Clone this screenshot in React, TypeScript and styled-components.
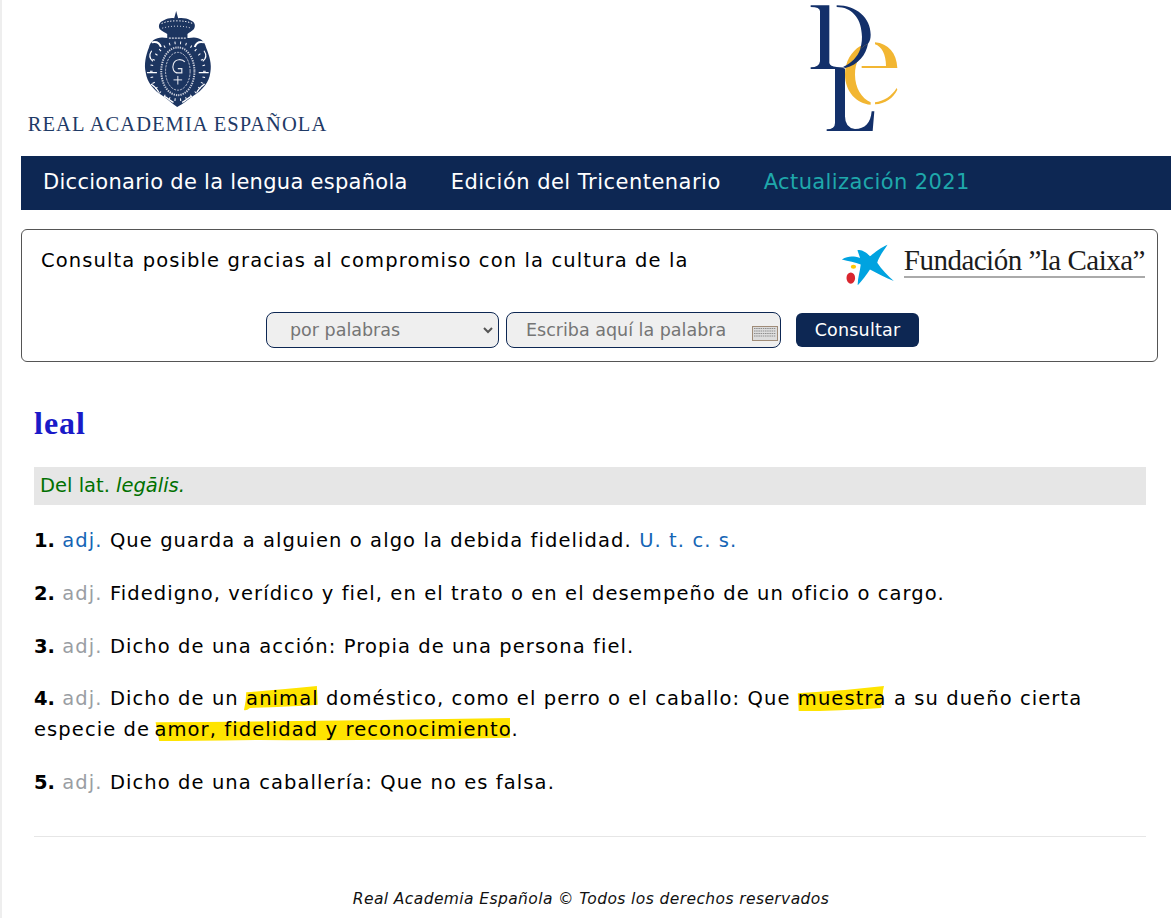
import React from "react";
import styled, { createGlobalStyle } from "styled-components";

const navy = "#0d2753";
const crestBlue = "#1d3461";
const gold = "#f2b632";

const GlobalStyle = createGlobalStyle`
  html, body {
    margin: 0;
    padding: 0;
    background: #fff;
  }
  body {
    border-left: 2px solid #eeeeee;
    font-family: "DejaVu Sans", sans-serif;
    color: #000;
    overflow: hidden;
  }
`;

const Page = styled.div`
  padding-left: 19px;
  height: 918px;
  box-sizing: border-box;
`;

const Header = styled.header`
  height: 156px;
  display: flex;
`;

const AcademiaLogo = styled.div`
  width: 313px;
  padding-top: 9px;
  display: flex;
  flex-direction: column;
  align-items: center;
`;

const AcademiaName = styled.div`
  font-family: "Liberation Serif", serif;
  font-size: 20.5px;
  letter-spacing: 1.05px;
  color: #1f3a66;
  white-space: nowrap;
  line-height: 24px;
  margin-top: 3px;
`;

const DleLogo = styled.div`
  margin-left: 476px;
  padding-top: 3px;
`;

const Nav = styled.nav`
  height: 54px;
  padding-bottom: 2px;
  box-sizing: border-box;
  background: ${navy};
  display: flex;
  align-items: center;
  padding-left: 22px;
  gap: 43px;
  font-size: 21px;
`;

const NavItem = styled.span<{ $accent?: boolean; $spacing: number }>`
  color: ${(p) => (p.$accent ? "#1fa8ab" : "#fff")};
  letter-spacing: ${(p) => p.$spacing}px;
  white-space: nowrap;
`;

const SearchBox = styled.section`
  box-sizing: border-box;
  margin: 19px 13px 0 0;
  height: 133px;
  border: 1px solid #555;
  border-radius: 6px;
  padding: 0 12px 0 19px;
  display: flex;
  flex-direction: column;
`;

const SponsorRow = styled.div`
  height: 82px;
  display: flex;
  justify-content: space-between;
`;

const SponsorText = styled.p`
  margin: 17px 0 0;
  font-size: 19.5px;
  line-height: 27px;
  letter-spacing: 1.12px;
  white-space: nowrap;
`;

const SponsorLogo = styled.div`
  display: flex;
  align-items: flex-start;
  padding-top: 13px;
`;

const SponsorName = styled.div`
  font-family: "Liberation Serif", serif;
  font-size: 29px;
  line-height: 31px;
  letter-spacing: -0.5px;
  color: #1c1c1c;
  border-bottom: 2px solid #aaa;
  margin: 2px 0 0 9px;
  white-space: nowrap;
`;

const Controls = styled.form`
  display: flex;
  align-items: center;
  margin-left: 225px;
`;

const Field = styled.div<{ $width: number }>`
  box-sizing: border-box;
  position: relative;
  width: ${(p) => p.$width}px;
  height: 36px;
  border: 1px solid ${navy};
  border-radius: 8px;
  background: #efefef;
  color: #757575;
  font-size: 17.5px;
  line-height: 34px;
  display: flex;
  align-items: center;
  justify-content: space-between;
  margin-right: 7px;
`;

const FieldText = styled.span<{ $left: number }>`
  padding-left: ${(p) => p.$left}px;
  white-space: nowrap;
`;

const Submit = styled.button`
  box-sizing: border-box;
  width: 123px;
  height: 34px;
  margin-left: 8px;
  border: 0;
  border-radius: 6px;
  background: ${navy};
  color: #fff;
  font-family: inherit;
  font-size: 17.5px;
  letter-spacing: 0.2px;
  padding: 0;
`;

const Content = styled.main`
  margin: 0 25px 0 13px;
`;

const Headword = styled.h1`
  margin: 43px 0 0;
  font-family: "Liberation Serif", serif;
  font-size: 32px;
  line-height: 36px;
  letter-spacing: 1px;
  font-weight: bold;
  color: #1a1ac8;
`;

const Etymology = styled.p`
  margin: 26px 0 0;
  height: 38px;
  line-height: 38px;
  padding-left: 6px;
  background: #e6e6e6;
  color: #007000;
  font-size: 19.5px;
`;

const Definition = styled.p`
  margin: 20px 0 0;
  font-size: 19.5px;
  line-height: 31px;
  letter-spacing: 1.09px;
  isolation: isolate;
  & + & {
    margin-top: 21.75px;
  }
`;

const Num = styled.b`
  letter-spacing: 0;
`;

const Abbr = styled.span<{ $muted?: boolean }>`
  color: ${(p) => (p.$muted ? "#9a9ea3" : "#1565b5")};
`;

const Marked = styled.span<{ $shift: number }>`
  position: relative;
  margin-left: ${(p) => p.$shift}px;
`;

const MarkStroke = styled.svg`
  position: absolute;
  left: -2px;
  width: calc(100% + 1px);
  top: -1px;
  height: calc(100% + 2px);
  z-index: -1;
  overflow: visible;
`;

const Divider = styled.hr`
  margin: 38px 0 0;
  border: 0;
  border-top: 1px solid #e6e6e6;
`;

const Footer = styled.footer`
  margin-top: 53px;
  padding-left: 2px;
  text-align: center;
  font-size: 15.5px;
  font-style: italic;
  letter-spacing: 0.4px;
  color: #111;
`;

const Mark: React.FC<{ d: string; shift?: number; children: React.ReactNode }> = ({ d, shift = 0, children }) => (
  <Marked $shift={shift}>
    <MarkStroke viewBox="0 0 100 24" preserveAspectRatio="none">
      <path d={d} fill="#ffe400" />
    </MarkStroke>
    {children}
  </Marked>
);

// specks of light around the shield, in the same coordinates as the crest zoom
const ringSpecks = Array.from({ length: 30 }, (_, i) => {
  const a = (i / 30) * Math.PI * 2;
  return { x: 527 + Math.cos(a) * 80, y: 212 + Math.sin(a) * 86, r: a * 57 };
});

const Crest = () => (
  <svg width="68" height="100" viewBox="425 25 205 300">
    <defs>
      <filter id="soft">
        <feGaussianBlur stdDeviation="1.1" />
      </filter>
    </defs>
    <g filter="url(#soft)">
      <g fill={crestBlue}>
        <path d="M522 30L528 52C540 50 555 52 565 58C578 62 582 75 575 85C568 92 560 95 556 100V112H495V100C490 95 480 92 473 85C466 75 472 62 485 58C495 52 508 50 516 52Z" />
        <path d="M495 112C470 105 445 115 440 140C430 165 425 190 430 215C434 245 455 270 480 285C495 295 510 310 525 320C545 310 560 295 575 285C600 270 622 245 625 215C630 190 622 165 612 140C607 115 585 105 560 112Z" />
      </g>
      <g fill="none" stroke="#fff">
        <path d="M478 68c14-6 28-8 46-8s32 2 48 8" strokeWidth="3" strokeDasharray="4 5" />
        <path d="M480 82c14-4 28-6 44-6s30 2 44 6" strokeWidth="2.5" strokeDasharray="3 6" />
        <path d="M500 112h52" strokeWidth="3" strokeDasharray="6 3" />
        <ellipse cx="527" cy="212" rx="50" ry="72" strokeWidth="6" strokeDasharray="4 3" opacity="0.75" />
        <ellipse cx="527" cy="212" rx="37" ry="57" strokeWidth="2" strokeDasharray="7 3" />
        <path d="M548 184c-8-10-28-10-34 5-6 15 2 28 13 28h12v-13h-12" strokeWidth="3.5" opacity="0.9" />
        <path d="M527 226v26M514 238h26" strokeWidth="3" opacity="0.9" />
        <path d="M448 125c14-4 24 2 28 14M606 125c-14-4-24 2-28 14" strokeWidth="6" />
        <path d="M448 150c-8 12-6 24 4 32M606 150c8 12 6 24-4 32" strokeWidth="3.5" />
        <path d="M434 216h30M590 216h30" strokeWidth="4" />
        <path d="M446 250c10 6 18 14 24 26M608 250c-10 6-18 14-24 26" strokeWidth="3.5" />
        <path d="M486 288c10 4 16 12 28 18M568 288c-10 4-16 12-28 18" strokeWidth="4" />
      </g>
      <g fill="#fff">
        {ringSpecks.map((s, i) => (
          <rect key={i} x={s.x - 4} y={s.y - 1.5} width="8" height="3" transform={`rotate(${s.r} ${s.x} ${s.y})`} />
        ))}
      </g>
    </g>
  </svg>
);

const DleMark = () => (
  <svg width="90" height="130" viewBox="90 10 270 390">
    <path
      fill={gold}
      d="M240 140C215 155 195 185 195 225C195 275 230 312 272 315V308C245 295 225 265 225 225C225 190 240 160 265 130Z"
    />
    <path fill={gold} d="M285 128C325 132 350 160 352 205H245V199H318C318 165 305 140 285 134Z" />
    <path fill={gold} d="M285 314V308C310 305 335 290 350 265L352 270C340 295 315 312 285 314Z" />
    <g fill="#13306a">
      <path d="M92 17H148V190Q150 200 170 202L198 204L190 208H92V203Q118 203 120 185V35Q120 22 92 22Z" />
      <path d="M170 17C230 17 272 55 272 105C272 115 270 125 264 132C254 137 245 142 240 150C246 130 247 115 245 100C242 55 215 22 170 22Z" />
      <path d="M264 132C258 165 235 195 196 205L190 201C215 190 233 170 240 150C245 142 254 137 264 132Z" />
      <path d="M165 208H195V350Q195 385 225 388C255 388 272 370 275 335H283L278 394H140V389Q165 389 165 370Z" />
    </g>
  </svg>
);

const CaixaStar = () => (
  <svg width="55" height="43" viewBox="60 50 165 130">
    <path
      fill="#00a3e0"
      d="M65 100C85 88 100 90 120 95L112 72C125 68 140 80 150 90C165 78 185 62 203 55C190 75 175 95 172 110C185 130 205 150 222 165C195 155 170 140 150 130C140 145 125 165 113 178C112 160 120 135 122 115C105 108 85 105 65 100Z"
    />
    <ellipse cx="100" cy="122" rx="8" ry="6" fill="#ffc800" />
    <ellipse cx="92" cy="156" rx="13" ry="17" fill="#d9262e" />
  </svg>
);

const KeyboardIcon = () => (
  <svg width="26" height="15" viewBox="0 0 26 15" style={{ marginRight: 2, marginTop: 7 }}>
    <rect x="0.5" y="0.5" width="25" height="14" fill="#ddd" stroke="#a08c78" />
    {[2.5, 5, 7.5, 10].map((y) => (
      <path key={y} d={`M2 ${y}h22`} stroke="#8d8d8d" strokeWidth="1.2" strokeDasharray="1.5 0.7" />
    ))}
  </svg>
);

const ChevronIcon = () => (
  <svg width="12" height="8" viewBox="0 0 12 8" style={{ marginRight: 4 }}>
    <path d="M2 2l4 4 4-4" fill="none" stroke="#555" strokeWidth="2" />
  </svg>
);

export default function App() {
  return (
    <Page>
      <GlobalStyle />
      <Header>
        <AcademiaLogo>
          <Crest />
          <AcademiaName>REAL ACADEMIA ESPAÑOLA</AcademiaName>
        </AcademiaLogo>
        <DleLogo>
          <DleMark />
        </DleLogo>
      </Header>
      <Nav>
        <NavItem $spacing={0.28}>Diccionario de la lengua española</NavItem>
        <NavItem $spacing={0.48}>Edición del Tricentenario</NavItem>
        <NavItem $accent $spacing={0.38}>Actualización 2021</NavItem>
      </Nav>
      <SearchBox>
        <SponsorRow>
          <SponsorText>Consulta posible gracias al compromiso con la cultura de la</SponsorText>
          <SponsorLogo>
            <CaixaStar />
            <SponsorName>Fundación ”la Caixa”</SponsorName>
          </SponsorLogo>
        </SponsorRow>
        <Controls>
          <Field $width={233}>
            <FieldText $left={23}>por palabras</FieldText>
            <ChevronIcon />
          </Field>
          <Field $width={275}>
            <FieldText $left={19}>Escriba aquí la palabra</FieldText>
            <KeyboardIcon />
          </Field>
          <Submit type="button">Consultar</Submit>
        </Controls>
      </SearchBox>
      <Content>
        <Headword>leal</Headword>
        <Etymology>
          Del lat. <i>legālis.</i>
        </Etymology>
        <Definition>
          <Num>1.</Num> <Abbr>adj.</Abbr> Que guarda a alguien o algo la debida fidelidad. <Abbr>U. t. c. s.</Abbr>
        </Definition>
        <Definition>
          <Num>2.</Num> <Abbr $muted>adj.</Abbr> Fidedigno, verídico y fiel, en el trato o en el desempeño de un oficio o cargo.
        </Definition>
        <Definition>
          <Num>3.</Num> <Abbr $muted>adj.</Abbr> Dicho de una acción: Propia de una persona fiel.
        </Definition>
        <Definition>
          <Num>4.</Num> <Abbr $muted>adj.</Abbr> Dicho de un{" "}
          <Mark d="M3 6Q40 4 99 0L100 18Q60 20 8 21Q3 24 0 23Q3 14 3 6z">animal</Mark> doméstico, como el perro o el caballo: Que{" "}
          <Mark d="M2 7Q50 5 98 0L97 4L95 21Q50 24 3 24z">muestra</Mark> a su dueño cierta especie de{" "}
          <Mark shift={-3} d="M1 5Q50 4 100 1L100 20Q60 23 30 22Q10 23 2 23z">amor, fidelidad y reconocimiento</Mark>.
        </Definition>
        <Definition>
          <Num>5.</Num> <Abbr $muted>adj.</Abbr> Dicho de una caballería: Que no es falsa.
        </Definition>
        <Divider />
        <Footer>Real Academia Española © Todos los derechos reservados</Footer>
      </Content>
    </Page>
  );
}
